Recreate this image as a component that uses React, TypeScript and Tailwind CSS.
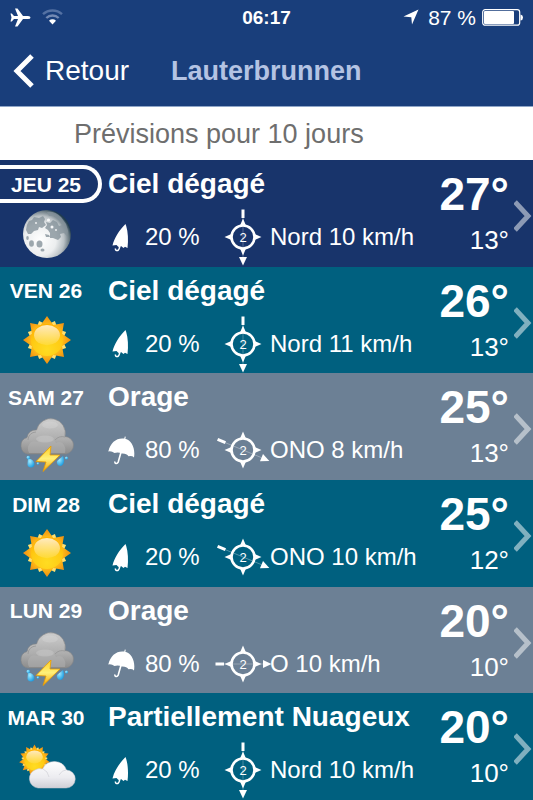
import clsx from "clsx";

type Sky = "moon" | "sun" | "storm" | "partly";

type Day = {
    label: string;
    title: string;
    sky: Sky;
    rain: number;
    wind: string;
    // Rotation of the wind arrow, 0 blows from the north
    angle: number;
    high: number;
    low: number;
    bg: string;
    current?: boolean;
};

const NAVY = "bg-[#18346b]";
const TEAL = "bg-[#00607f]";
const GREY = "bg-[#6c8095]";

const days: Day[] = [
    { label: "JEU 25", title: "Ciel dégagé", sky: "moon", rain: 20, wind: "Nord 10 km/h", angle: 0, high: 27, low: 13, bg: NAVY, current: true },
    { label: "VEN 26", title: "Ciel dégagé", sky: "sun", rain: 20, wind: "Nord 11 km/h", angle: 0, high: 26, low: 13, bg: TEAL },
    { label: "SAM 27", title: "Orage", sky: "storm", rain: 80, wind: "ONO 8 km/h", angle: -67.5, high: 25, low: 13, bg: GREY },
    { label: "DIM 28", title: "Ciel dégagé", sky: "sun", rain: 20, wind: "ONO 10 km/h", angle: -67.5, high: 25, low: 12, bg: TEAL },
    { label: "LUN 29", title: "Orage", sky: "storm", rain: 80, wind: "O 10 km/h", angle: -90, high: 20, low: 10, bg: GREY },
    { label: "MAR 30", title: "Partiellement Nuageux", sky: "partly", rain: 20, wind: "Nord 10 km/h", angle: 0, high: 20, low: 10, bg: TEAL },
];

// Alternating outer / inner points around a centre
function star(cx: number, cy: number, outer: number, inner: number, points: number, turn = 0) {
    return Array.from({ length: points * 2 }, (_, i) => {
        const r = i % 2 ? inner : outer;
        const a = (Math.PI * i) / points - Math.PI / 2 + turn;
        return `${(cx + r * Math.cos(a)).toFixed(2)},${(cy + r * Math.sin(a)).toFixed(2)}`;
    }).join(" ");
}

function Gradients() {
    return (
        <svg className="absolute size-0" aria-hidden="true">
            <defs>
                <radialGradient id="ray" cx="0.5" cy="0.5" r="0.5">
                    <stop offset="0.6" stopColor="#ffc21a" />
                    <stop offset="1" stopColor="#f08c10" />
                </radialGradient>
                <radialGradient id="disc" cx="0.5" cy="0.8" r="0.8">
                    <stop offset="0" stopColor="#ffdc22" />
                    <stop offset="0.6" stopColor="#ffcb14" />
                    <stop offset="1" stopColor="#ffb000" />
                </radialGradient>
                <linearGradient id="gloss" x1="0" y1="0" x2="0" y2="1">
                    <stop offset="0" stopColor="#fff" stopOpacity="0.75" />
                    <stop offset="1" stopColor="#fff" stopOpacity="0.1" />
                </linearGradient>
                <linearGradient id="dark" x1="0" y1="0" x2="0" y2="1">
                    <stop offset="0" stopColor="#cdcdcd" />
                    <stop offset="0.6" stopColor="#adadad" />
                    <stop offset="1" stopColor="#8c8c8c" />
                </linearGradient>
                <linearGradient id="light" x1="0" y1="0" x2="0" y2="1">
                    <stop offset="0" stopColor="#ffffff" />
                    <stop offset="0.6" stopColor="#ececf0" />
                    <stop offset="1" stopColor="#cfcfd6" />
                </linearGradient>
                <linearGradient id="bolt" x1="0" y1="0" x2="0" y2="1">
                    <stop offset="0" stopColor="#ffcf20" />
                    <stop offset="0.5" stopColor="#fff07a" />
                    <stop offset="1" stopColor="#f5a300" />
                </linearGradient>
                <radialGradient id="drop" cx="0.35" cy="0.35" r="0.7">
                    <stop offset="0" stopColor="#a5ecff" />
                    <stop offset="1" stopColor="#1b9be0" />
                </radialGradient>
                <radialGradient id="moon" cx="0.36" cy="0.62" r="0.66">
                    <stop offset="0" stopColor="#ffffff" />
                    <stop offset="0.5" stopColor="#eceeef" />
                    <stop offset="0.75" stopColor="#b9c0c4" />
                    <stop offset="0.92" stopColor="#66767f" />
                    <stop offset="1" stopColor="#1f3b50" />
                </radialGradient>
            </defs>
        </svg>
    );
}

function Sun({ cx, cy, r, points }: { cx: number; cy: number; r: number; points: number }) {
    return (
        <g>
            <polygon points={star(cx, cy, r * 0.86, r * 0.64, points, Math.PI / points)} fill="#ffe070" />
            <polygon points={star(cx, cy, r, r * 0.68, points)} fill="url(#ray)" />
            <circle cx={cx} cy={cy} r={r * 0.67} fill="url(#disc)" />
            <ellipse cx={cx} cy={cy - r * 0.2} rx={r * 0.54} ry={r * 0.42} fill="url(#gloss)" />
        </g>
    );
}

function SkyIcon({ sky }: { sky: Sky }) {
    return (
        <svg viewBox="0 0 56 52" className="h-[52px] w-[56px] overflow-visible" aria-hidden="true">
            {sky === "moon" && (
                <g>
                    <circle cx="28" cy="27" r="24" fill="url(#moon)" />
                    <g fill="#87949c" opacity="0.8">
                        <path d="M7 23 Q7 18 10 14 L13 13 15 10 20 11 24 9 26 12 25 15 27 18 23 21 20 20 19 23 15 24 12 27 9 27Z" />
                        <path d="M28 5 Q36 4 42 10 L47 17 49 24 48 29 45 26 41 27 42 30 39 33 34 31 31 31 31 26 29 23 26 21 28 18 27 15 31 16 34 13 38 15 40 19 43 18 40 13 35 9 30 9Z" />
                        <path d="M26 27 L30 28 31 30 27 30Z" />
                        <ellipse cx="12.5" cy="36.5" rx="2.4" ry="3.2" />
                        <ellipse cx="20.5" cy="37" rx="3" ry="3.6" />
                        <ellipse cx="23.5" cy="43" rx="2" ry="1.6" />
                        <ellipse cx="8.5" cy="31" rx="1.3" ry="2" />
                    </g>
                    <g fill="#f6f7f8">
                        <circle cx="29.5" cy="13" r="1.6" />
                        <circle cx="33" cy="20" r="1.5" />
                        <circle cx="17" cy="16" r="0.9" />
                        <circle cx="37" cy="23" r="0.9" />
                    </g>
                </g>
            )}
            {sky === "sun" && <Sun cx={28} cy={26} r={24} points={8} />}
            {sky === "storm" && (
                <g>
                    <path
                        d="M9 34 A8.5 8.5 0 0 1 8 17.5 A8.5 8.5 0 0 1 17.5 10 A14.5 14.5 0 0 1 46 16.5 A8.8 8.8 0 0 1 47 34Z"
                        fill="url(#dark)"
                        stroke="#858585"
                        strokeWidth="0.6"
                    />
                    <path d="M9 20 A8 8 0 0 1 17 12 M36 20 A10 10 0 0 1 46 17" fill="none" stroke="#959595" strokeWidth="0.8" />
                    <path d="M10 33 C6 24 14 19 18 22 A11 11 0 0 1 37 23 C42 20 48 25 46 33Z" fill="#b4b4b4" opacity="0.5" />
                    <ellipse cx="26" cy="19" rx="9" ry="3.5" fill="#e2e2e2" opacity="0.25" />
                    <ellipse cx="31" cy="5" rx="8" ry="3.5" fill="#e2e2e2" opacity="0.25" />
                    <g fill="url(#drop)">
                        <path d="M9 38 C12 39 16 41 15.5 44.5 A3.5 3.5 0 0 1 8.5 43.5Z" />
                        <path d="M44 36 C46 40 45 46 41 46 A3.8 3.8 0 0 1 38 41Z" />
                        <circle cx="9.3" cy="37.5" r="1.8" />
                        <circle cx="47.5" cy="38" r="1.6" />
                        <circle cx="19" cy="43.5" r="1.3" />
                    </g>
                    <path d="M32 26 L17 41.5 27 42 24 51.5 41 35 31 35Z" fill="url(#bolt)" stroke="#e89c00" strokeWidth="0.8" />
                </g>
            )}
            {sky === "partly" && (
                <g>
                    <Sun cx={15.5} cy={20} r={15.5} points={11} />
                    <path
                        d="M19 48 A9.5 9.5 0 0 1 17 29.5 Q20 28 23.5 29 A13 13 0 0 1 47.5 30 A9 9 0 0 1 47 48Z"
                        fill="url(#light)"
                        stroke="#c4c4cc"
                        strokeWidth="0.5"
                    />
                    <path d="M24 29 Q29 31 30 37 M40 35 Q43 30 47 30" fill="none" stroke="#d4d4da" strokeWidth="0.8" />
                </g>
            )}
        </svg>
    );
}

function Umbrella({ open }: { open: boolean }) {
    return (
        <svg viewBox="0 0 27 29" className="h-[29px] w-[27px] shrink-0" fill="white" aria-hidden="true">
            {open ? (
                <>
                    <path d="M16.3 2.6 L16.8 0.5 17.8 0.8 17.3 2.8 C23.5 4.5 27.5 12 26 21.5 Q24 19.5 20.5 20.3 Q18.5 17.3 13.8 17.6 Q10 15.5 6.5 17 Q3.5 14.8 0.3 15.5 C2.5 6 9 1.500 16.3 2.6Z" />
                    <path d="M13.2 15.5 L10.3 25.8 Q9.3 28 7.5 27.3 Q6.7 26.8 7 25.5" fill="none" stroke="white" strokeWidth="1.6" />
                </>
            ) : (
                <>
                    <path d="M17.5 1 L18.2 3 C20 9 20.5 17 19.5 25 L17 23.8 15.5 25 13 23 10.5 24 8.5 22 4.5 22.5 C6.5 14.5 11 7.5 17.5 1Z" />
                    <path d="M12.3 22 L11 26 Q10 28.3 8 27.3 Q7.2 26.8 7.5 25.5" fill="none" stroke="white" strokeWidth="1.5" />
                </>
            )}
        </svg>
    );
}

function Compass({ angle }: { angle: number }) {
    return (
        <svg viewBox="-25 -28 50 56" className="h-[56px] w-[50px] shrink-0 overflow-visible" fill="white" aria-hidden="true">
            <circle r="11.5" fill="none" stroke="white" strokeWidth="2.6" />
            <path d="M0 -18.5 L3.2 -11 H-3.2Z M0 18.5 L3.2 11 H-3.2Z M-18.5 0 L-11 -3.2 V3.2Z M18.5 0 L11 -3.2 V3.2Z" />
            <g transform={`rotate(${angle})`}>
                <path d="M0 -19 V20" stroke="white" strokeOpacity="0.35" strokeWidth="0.8" />
                <rect x="-1.5" y="-27.5" width="3" height="8.5" />
                <path d="M-4 20 H4 L0 28.5Z" />
            </g>
            <text y="5" textAnchor="middle" className="text-[13px]">2</text>
        </svg>
    );
}

function StatusBar() {
    return (
        <div className="grid h-[34px] grid-cols-[1fr_auto_1fr] items-center px-[10px] leading-none">
            <div className="flex items-center gap-[11px]">
                <svg viewBox="0 0 21 19" className="h-[19px] w-[21px]" fill="white" aria-label="Mode avion">
                    <path d="M20.5 9.5 Q20.5 8 18 8 H13 L7.5 0.5 H5 L8 8 H4 L1.8 5.5 H0.5 L1.5 9.5 0.5 13.5 H1.8 L4 11 H8 L5 18.5 H7.5 L13 11 H18 Q20.5 11 20.5 9.5Z" />
                </svg>
                <svg viewBox="0 0 21 16" className="h-[16px] w-[21px]" fill="none" aria-label="Wi-Fi">
                    <path d="M1 5.2 A14 14 0 0 1 20 5.2" stroke="#5471a3" strokeWidth="2.4" />
                    <path d="M4.3 9 A9 9 0 0 1 16.7 9" stroke="#7389b3" strokeWidth="2.4" />
                    <path d="M7 11.8 A5 5 0 0 1 14 11.8 L10.5 15.5Z" fill="white" />
                </svg>
            </div>
            <span className="text-[19px] font-bold">06:17</span>
            <div className="flex items-center justify-end">
                <svg viewBox="0 0 16 16" className="mr-[9px] h-[16px] w-[16px]" fill="white" aria-label="Localisation">
                    <path d="M15.5 0.5 L9 15.5 8.3 8.3 0.5 7.5Z" />
                </svg>
                <span className="mr-[6px] text-[21px]">87 %</span>
                <svg viewBox="0 0 41 17" className="h-[17px] w-[41px]" aria-label="Batterie">
                    <rect x="0.7" y="0.7" width="37" height="15.5" rx="2.5" fill="none" stroke="white" strokeWidth="1.2" />
                    <rect x="2" y="2" width="30" height="13" rx="1" fill="white" />
                    <path d="M38.5 5.5 Q41 6 41 8.5 T38.5 11.5Z" fill="white" />
                </svg>
            </div>
        </div>
    );
}

function DayRow({ day }: { day: Day }) {
    return (
        <li className={clsx("flex min-h-[106px] flex-1", day.bg)}>
            <a href="#detail" className="flex w-full text-white">
                <div className="w-[108px] shrink-0">
                    <div
                        className={clsx(
                            "mt-[5px] flex h-[38px] w-[102px] items-center justify-center rounded-r-full border-y-4 border-r-4 pr-[6px] text-[21px] leading-none font-bold whitespace-nowrap",
                            day.current ? "border-white" : "border-transparent"
                        )}
                    >
                        {day.label}
                    </div>
                    <div className="mt-1 pl-[19px]">
                        <SkyIcon sky={day.sky} />
                    </div>
                </div>

                <div className="min-w-0 flex-1">
                    <h2 className="mt-[8px] text-[28px] leading-[32px] font-bold whitespace-nowrap">{day.title}</h2>
                    <div className="mt-[9px] flex h-[56px] items-center text-[24px] whitespace-nowrap">
                        <Umbrella open={day.rain >= 50} />
                        <span className="ml-[10px] w-[73px]">{day.rain} %</span>
                        <Compass angle={day.angle} />
                        <span className="ml-[2px]">{day.wind}</span>
                    </div>
                </div>

                <div className="shrink-0 text-right">
                    <div className="mt-[10px] text-[46px] leading-[48px] font-bold">{day.high}°</div>
                    <div className="mt-[8px] text-[26px] leading-[28px]">{day.low}°</div>
                </div>

                <svg viewBox="0 0 18 34" className="mt-[39px] mr-px ml-[5px] h-[34px] w-[18px] shrink-0" fill="none" aria-hidden="true">
                    <path d="M1 3 L14 17 1 31" stroke="white" strokeOpacity="0.5" strokeWidth="5" />
                </svg>
            </a>
        </li>
    );
}

export default function App() {
    return (
        <div className="flex min-h-screen flex-col bg-[#00607f] font-['Liberation_Sans',Arial,sans-serif] text-white">
            <Gradients />
            <header className="h-[107px] border-b border-[#8fa6c8] bg-[#193e7b]">
                <StatusBar />
                <div className="flex h-[74px] items-center pl-[13px]">
                    <button type="button" className="flex items-center gap-[10px] text-[28px] leading-none">
                        <svg viewBox="0 0 22 34" className="h-[34px] w-[22px]" fill="none" aria-hidden="true">
                            <path d="M19 2 L4 17 19 32" stroke="white" strokeWidth="5" />
                        </svg>
                        Retour
                    </button>
                    <h1 className="ml-[42px] text-[27px] leading-none font-bold text-[#b4c3e3]">Lauterbrunnen</h1>
                </div>
            </header>
            <p className="h-[53px] bg-white pl-[74px] text-[27px] leading-[54px] text-[#6e6e6e]">Prévisions pour 10 jours</p>
            <ul className="flex flex-1 flex-col">
                {days.map(day => (
                    <DayRow key={day.label} day={day} />
                ))}
            </ul>
        </div>
    );
}
